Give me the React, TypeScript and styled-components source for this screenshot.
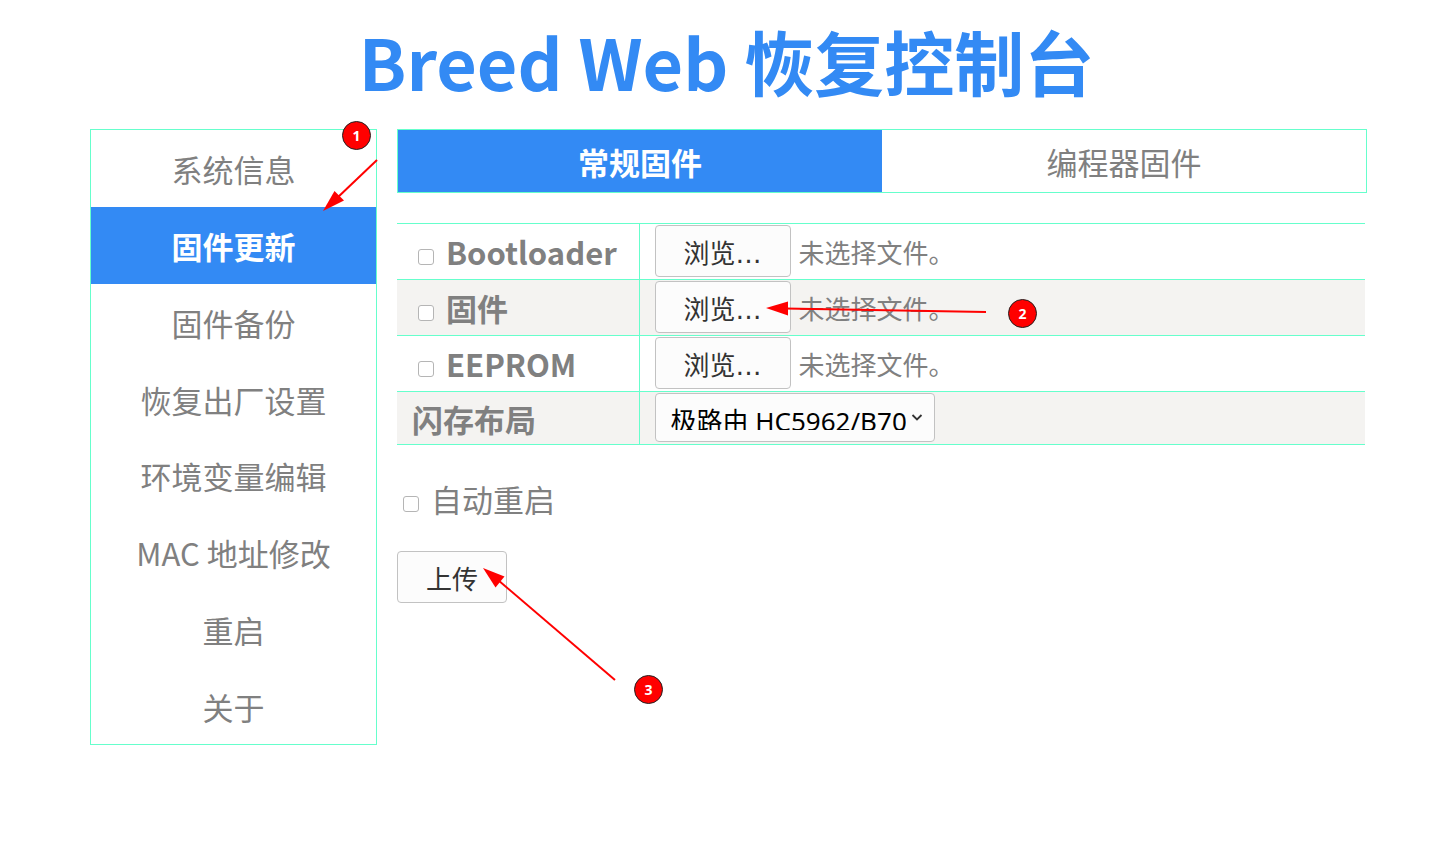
import React, { useRef } from "react";
import styled, { createGlobalStyle } from "styled-components";

const BLUE = "#338af4";
const MINT = "#66ffcc";
const GREY = "#808080";
const CJK = '"Noto Sans CJK SC", sans-serif';

const GlobalStyle = createGlobalStyle`
  *, *::before, *::after { box-sizing: border-box; }
  body {
    margin: 0;
    background: #fff;
    color: ${GREY};
    font-family: ${CJK};
    font-size: 31px;
    line-height: 46px;
  }
`;

const Page = styled.div`
  position: relative;
  padding: 11px 77px 40px 90px;
`;

const Title = styled.h1`
  margin: 0 4px 18px 0;
  color: ${BLUE};
  font-size: 70px;
  font-weight: 700;
  line-height: 100px;
  text-align: center;
`;

const Columns = styled.div`
  display: flex;
  align-items: flex-start;
  gap: 20px;
`;

const Sidebar = styled.nav`
  flex: 0 0 287px;
  display: grid;
  grid-auto-rows: 1fr;
  min-height: 616px;
  border: 1px solid ${MINT};
`;

const NavLink = styled.a<{ $active?: boolean }>`
  display: flex;
  align-items: center;
  justify-content: center;
  padding-top: 2px;
  background: ${(p) => (p.$active ? BLUE : "transparent")};
  color: ${(p) => (p.$active ? "#fff" : GREY)};
  font-weight: ${(p) => (p.$active ? 700 : 400)};
  text-decoration: none;
`;

const Main = styled.main`
  flex: 1;
  min-width: 0;
`;

const Tabs = styled.div`
  display: grid;
  grid-template-columns: 1fr 1fr;
  border: 1px solid ${MINT};
`;

const Tab = styled(NavLink)`
  height: 62px;
`;

const UploadForm = styled.form`
  margin: 30px 2px 0 0;
`;

const FirmwareTable = styled.table`
  width: 100%;
  border-collapse: collapse;
  table-layout: fixed;

  tr { border-top: 1px solid ${MINT}; }
  tr:nth-child(even) { background: #f4f3f1; }
  tr:last-child { border-bottom: 1px solid ${MINT}; }
`;

const LabelColumn = styled.col`
  width: 242px;
`;

const HeadCell = styled.th`
  padding: 1px 0 0 15px;
  border-right: 1px solid ${MINT};
  font-weight: 700;
  text-align: left;
`;

const ValueCell = styled.td`
  padding: 1px 0 2px 15px;
`;

const CheckLabel = styled.label`
  display: flex;
  align-items: center;
  gap: 12px;
  padding-left: 6px;
`;

const Checkbox = styled.input.attrs({ type: "checkbox" })`
  appearance: none;
  width: 16px;
  height: 16px;
  margin: 9px 0 0;
  border: 1px solid #b5b5b5;
  border-radius: 3px;
  background: #fff;

  &:checked { background: ${BLUE}; }
`;

const Button = styled.button`
  height: 52px;
  padding: 5px 28px 0;
  border: 1px solid #c2c2c2;
  border-radius: 4px;
  background: #fcfcfc;
  color: #333;
  font-family: "DejaVu Sans", "Noto Sans CJK SC", sans-serif;
  font-size: 26px;
  line-height: 38px;
`;

const FileRow = styled.div`
  display: flex;
  align-items: center;
  gap: 8px;
  font-size: 26px;
  line-height: 38px;
`;

const FileStatus = styled.span`
  padding-top: 2px;
`;

const SelectBox = styled.div`
  position: relative;
  width: 280px;
`;

const Select = styled.select`
  appearance: none;
  display: block;
  width: 100%;
  height: 49px;
  padding: 9px 28px 11px 15px;
  border: 1px solid #c2c2c2;
  border-radius: 4px;
  background: #fcfcfc;
  color: #000;
  font-family: "Noto Sans", "Noto Sans CJK SC", sans-serif;
  font-size: 26px;
`;

const Chevron = styled.svg`
  position: absolute;
  right: 12px;
  top: 20px;
  pointer-events: none;
`;

const RestartLabel = styled(CheckLabel)`
  margin: 31px 0 29px;
`;

const Marks = styled.svg`
  position: absolute;
  left: 0;
  top: 0;
  pointer-events: none;
`;

const Badge = styled.span<{ $x: number; $y: number }>`
  position: absolute;
  left: ${(p) => p.$x}px;
  top: ${(p) => p.$y}px;
  width: 29px;
  height: 29px;
  border: 1px solid #222;
  border-radius: 50%;
  background: #f00;
  color: #fff;
  font: 700 14px/28px "Open Sans", sans-serif;
  text-align: center;
`;

const navItems = [
  "系统信息",
  "固件更新",
  "固件备份",
  "恢复出厂设置",
  "环境变量编辑",
  "MAC 地址修改",
  "重启",
  "关于",
];

const images = ["Bootloader", "固件", "EEPROM"];

function FilePicker({ name }: { name: string }) {
  const input = useRef<HTMLInputElement>(null);
  return (
    <FileRow>
      <input ref={input} type="file" hidden aria-label={name} />
      <Button type="button" onClick={() => input.current?.click()}>
        浏览…
      </Button>
      <FileStatus>未选择文件。</FileStatus>
    </FileRow>
  );
}

export default function App() {
  return (
    <Page>
      <GlobalStyle />
      <Title>Breed Web 恢复控制台</Title>
      <Columns>
        <Sidebar>
          {navItems.map((item) => (
            <NavLink key={item} href="#" $active={item === "固件更新"}>
              {item}
            </NavLink>
          ))}
        </Sidebar>
        <Main>
          <Tabs>
            <Tab href="#" $active>
              常规固件
            </Tab>
            <Tab href="#">编程器固件</Tab>
          </Tabs>
          <UploadForm onSubmit={(e) => e.preventDefault()}>
            <FirmwareTable>
              <colgroup>
                <LabelColumn />
                <col />
              </colgroup>
              <tbody>
                {images.map((name) => (
                  <tr key={name}>
                    <HeadCell scope="row">
                      <CheckLabel>
                        <Checkbox />
                        {name}
                      </CheckLabel>
                    </HeadCell>
                    <ValueCell>
                      <FilePicker name={name} />
                    </ValueCell>
                  </tr>
                ))}
                <tr>
                  <HeadCell scope="row">
                    <label htmlFor="layout">闪存布局</label>
                  </HeadCell>
                  <ValueCell>
                    <SelectBox>
                      <Select id="layout">
                        <option>极路由 HC5962/B70</option>
                      </Select>
                      <Chevron width="12" height="10" viewBox="0 0 12 10">
                        <path d="M1.5 2l4.5 4.5L10.5 2" fill="none" stroke="#333" strokeWidth="1.8" />
                      </Chevron>
                    </SelectBox>
                  </ValueCell>
                </tr>
              </tbody>
            </FirmwareTable>
            <RestartLabel>
              <Checkbox />
              自动重启
            </RestartLabel>
            <Button type="submit">上传</Button>
          </UploadForm>
        </Main>
      </Columns>
      <Marks width="1100" height="720" viewBox="0 0 1100 720" aria-hidden="true">
        <g stroke="#f00" strokeWidth="2" fill="none">
          <path d="M377 160L336 199" />
          <path d="M986 312L785 308.5" />
          <path d="M615 680L498 580" />
        </g>
        <g fill="#f00">
          <path d="M323 211L334.5 191L344 200.5z" />
          <path d="M766 308L788 301.5V315.5z" />
          <path d="M483 568L504.5 576.5L495.5 587.5z" />
        </g>
      </Marks>
      <Badge $x={342} $y={121}>1</Badge>
      <Badge $x={1008} $y={299}>2</Badge>
      <Badge $x={634} $y={675}>3</Badge>
    </Page>
  );
}
